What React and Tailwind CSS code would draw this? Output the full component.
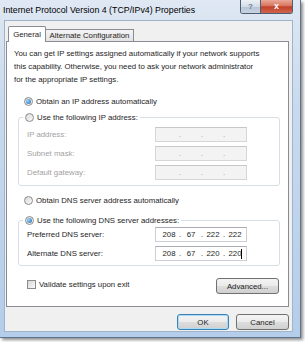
import React from 'react';

const Radio = ({ checked }) => (
  <span className="w-[9px] h-[9px] rounded-full border border-[#8a8c8e] bg-[linear-gradient(135deg,#d8d8d8,#fbfbfb)] flex items-center justify-center shrink-0">
    {checked && (
      <span className="w-[5px] h-[5px] rounded-full bg-[radial-gradient(circle_at_35%_35%,#9ad8ff,#1d5fa6)]" />
    )}
  </span>
);

const IpBox = ({ octets, disabled, caret }) => (
  <div
    className={
      'w-[92px] h-[15px] border flex items-center pl-[4px] ' +
      (disabled
        ? 'bg-[#f3f3f3] border-[#d6d6d6] border-t-[#c7c7c7] text-[#9a9a9a]'
        : 'bg-white border-[#ccd0d6] border-t-[#a9adb3] text-[#1e1e1e]')
    }
  >
    {[0, 1, 2, 3].map((i) => (
      <React.Fragment key={i}>
        <span className="w-[18px] text-center">{octets ? octets[i] : ''}</span>
        {i < 3 && <span className="w-[4px] text-center">.</span>}
        {i === 3 && caret && <span className="w-[1px] h-[10px] bg-black -ml-[3px]" />}
      </React.Fragment>
    ))}
  </div>
);

const Row = ({ label, disabled, octets, caret }) => (
  <div className="flex items-center h-[15px]">
    <span className={'w-[128px] ' + (disabled ? 'text-[#a2a2a2]' : 'text-[#1e1e1e]')}>{label}</span>
    <IpBox octets={octets} disabled={disabled} caret={caret} />
  </div>
);

const Button = ({ children, primary, className }) => (
  <button
    className={
      'h-[16px] rounded-[3px] border text-[7.8px] text-[#1e1e1e] flex items-center justify-center bg-[linear-gradient(#f4f4f4,#ebebeb_48%,#dddddd_52%,#d0d0d0)] ' +
      (primary ? 'border-[#3c7fb1] shadow-[inset_0_0_0_1px_#a9dcf7] ' : 'border-[#707070] ') +
      className
    }
  >
    {children}
  </button>
);

export default function App() {
  return (
    <div className="w-[305px] h-[342px] bg-white overflow-hidden font-['Liberation_Sans',Arial,sans-serif] text-[7.8px] leading-[13px] text-[#1e1e1e]">
      <div className="w-[301px] h-[338px] flex flex-col bg-[linear-gradient(#dfe8f3,#c9daee_30%,#b4cdea)] border-r border-b border-[#5f738c] shadow-[2px_2px_3px_rgba(0,0,0,0.45)]">
        {/* title bar */}
        <div className="h-[20px] flex items-start shrink-0">
          <span className="pl-[3px] pt-[4px] text-[8.8px] leading-[12px] text-black">
            Internet Protocol Version 4 (TCP/IPv4) Properties
          </span>
          <div className="ml-auto mr-[7px] flex h-[14px] border border-t-0 border-[#4d5d72] rounded-b-[3px] overflow-hidden">
            <div className="w-[20px] flex items-center justify-center bg-[linear-gradient(#edf1f6,#d3dce8_50%,#b6c4d6_52%,#c8d4e2)] border-r border-[#4d5d72] text-[8px] font-bold text-[#6b7d93] leading-none">
              ?
            </div>
            <div className="w-[31px] flex items-center justify-center bg-[linear-gradient(#eaa898,#d8755e_45%,#c2402a_52%,#d0654c)] text-[9px] font-bold text-white leading-none">
              x
            </div>
          </div>
        </div>

        {/* client area */}
        <div className="flex-1 flex pl-[4px] pr-[7px] pb-[5px]">
          <div className="flex-1 bg-[#f0f0f0] border border-[#9fb3cb] flex flex-col pt-[5px] pl-[1px] pr-[3px]">
            {/* tabs */}
            <div className="flex items-end pl-[2px] h-[15px]">
              <div className="relative z-10 w-[38px] h-[16px] -mb-[1px] bg-white border border-b-0 border-[#898c95] rounded-t-[2px] flex items-start justify-center pt-[1px]">
                General
              </div>
              <div className="w-[88px] h-[12px] border border-l-0 border-b-0 border-[#898c95] bg-[linear-gradient(#f4f4f4,#e3e3e3)] flex items-center justify-center">
                Alternate Configuration
              </div>
            </div>

            {/* panel */}
            <div className="h-[266px] bg-white border border-[#898c95] flex flex-col pt-[5px] px-[7px]">
              <p>
                You can get IP settings assigned automatically if your network supports
                <br />
                this capability. Otherwise, you need to ask your network administrator
                <br />
                for the appropriate IP settings.
              </p>

              <div className="mt-[9px] ml-[10px] flex items-center gap-[3px] h-[13px]">
                <Radio checked />
                <span>Obtain an IP address automatically</span>
              </div>

              <fieldset className="mt-[3px] ml-[4px] w-[262px] border border-[#d5dfe5] rounded-[3px] px-0 pt-[3px] pb-[5px]">
                <legend className="ml-[4px] px-[2px]">
                  <span className="flex items-center gap-[3px] h-[13px]">
                    <Radio />
                    <span>Use the following IP address:</span>
                  </span>
                </legend>
                <div className="px-[8px] flex flex-col gap-[4px]">
                  <Row label="IP address:" disabled />
                  <Row label="Subnet mask:" disabled />
                  <Row label="Default gateway:" disabled />
                </div>
              </fieldset>

              <div className="mt-[8px] ml-[10px] flex items-center gap-[3px] h-[13px]">
                <Radio />
                <span>Obtain DNS server address automatically</span>
              </div>

              <fieldset className="mt-[7px] ml-[4px] w-[262px] border border-[#d5dfe5] rounded-[3px] px-0 pt-0 pb-[4px]">
                <legend className="ml-[4px] px-[2px]">
                  <span className="flex items-center gap-[3px] h-[13px]">
                    <Radio checked />
                    <span>Use the following DNS server addresses:</span>
                  </span>
                </legend>
                <div className="px-[8px] flex flex-col gap-[4px]">
                  <Row label="Preferred DNS server:" octets={['208', '67', '222', '222']} />
                  <Row label="Alternate DNS server:" octets={['208', '67', '220', '220']} caret />
                </div>
              </fieldset>

              <div className="mt-[12px] flex items-start justify-between pl-[13px] pr-[2px]">
                <div className="flex items-center gap-[3px] h-[13px]">
                  <span className="w-[9px] h-[9px] border border-[#8a8c8e] bg-[linear-gradient(135deg,#d6d6d6,#fafafa)]" />
                  <span>Validate settings upon exit</span>
                </div>
                <Button className="w-[63px]">Advanced...</Button>
              </div>
            </div>

            {/* dialog buttons */}
            <div className="mt-[7px] flex justify-end gap-[7px]">
              <Button primary className="w-[52px]">OK</Button>
              <Button className="w-[53px]">Cancel</Button>
            </div>
          </div>
        </div>
      </div>
    </div>
  );
}
